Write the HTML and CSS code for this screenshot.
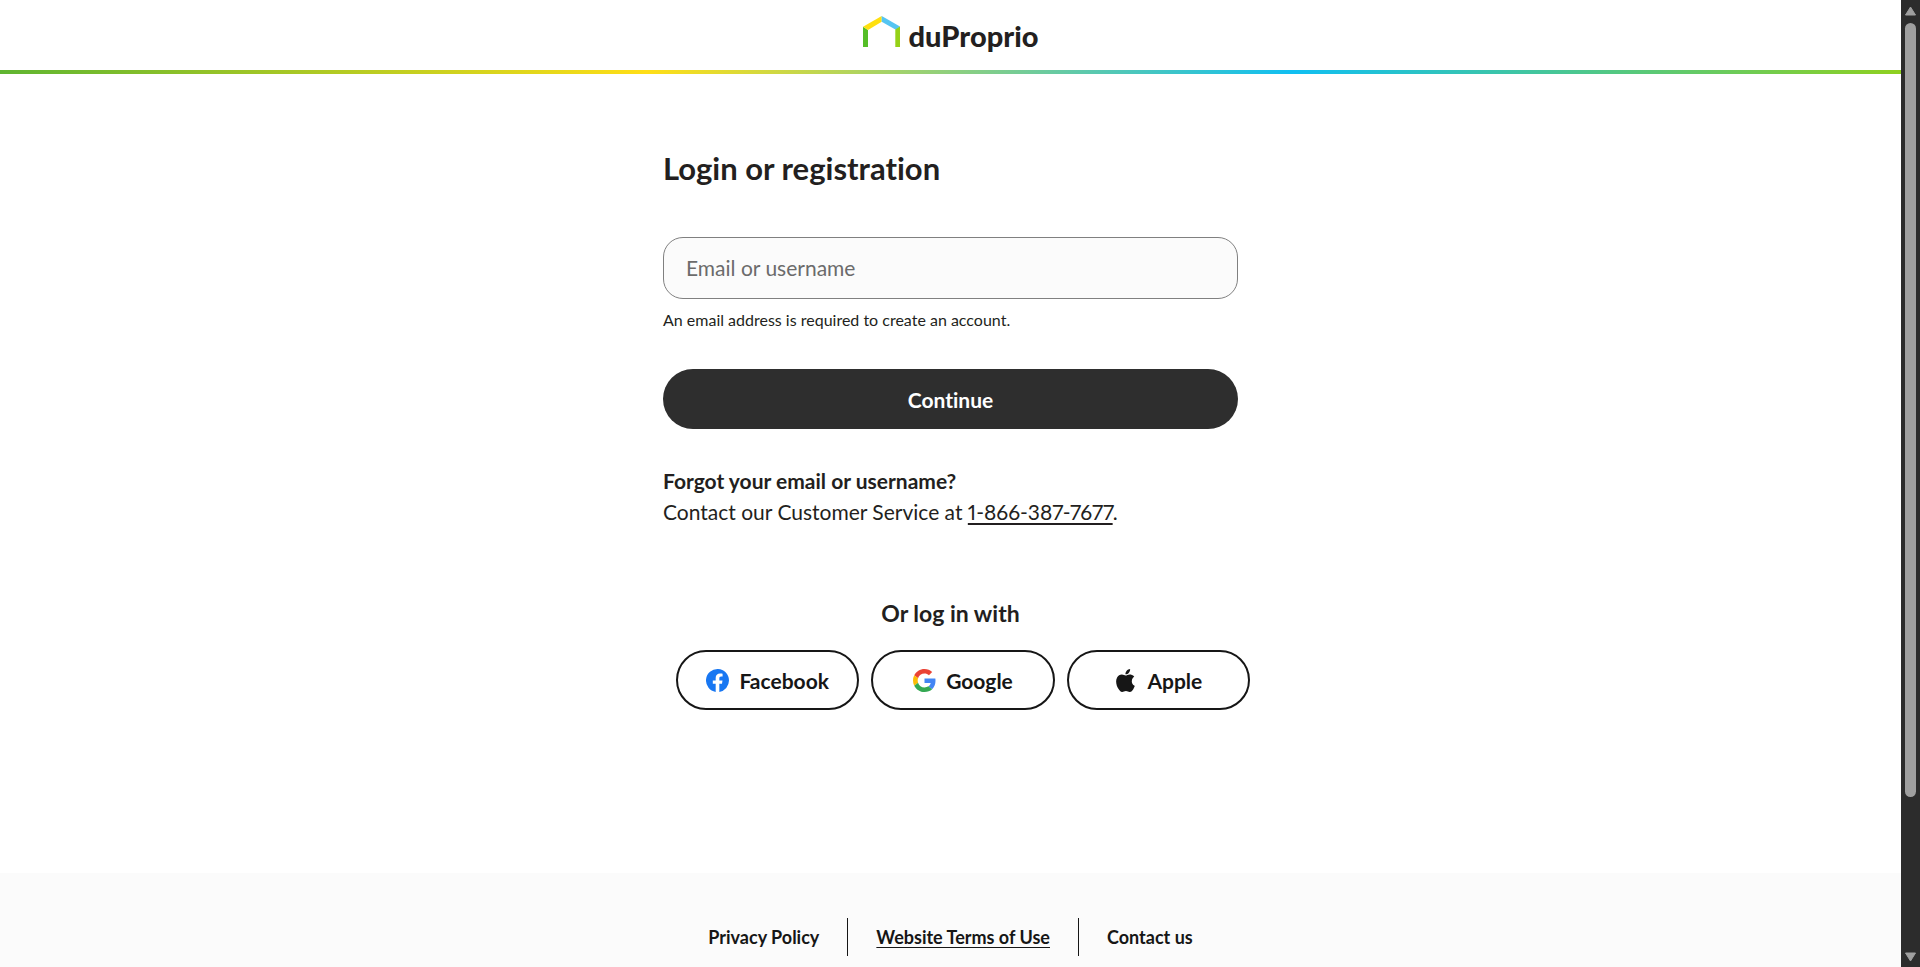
FILE: index.html
```html
<!DOCTYPE html>
<html lang="en">
<head>
<meta charset="utf-8">
<meta name="viewport" content="width=device-width, initial-scale=1">
<title>Login or registration - DuProprio</title>
<link rel="stylesheet" href="styles.css">
</head>
<body>
<div class="viewport">
  <div class="page">
    <header class="header">
      <a class="logo" href="#">
        <svg class="logo-mark" viewBox="0 0 37 31" aria-hidden="true">
          <path fill="#55be28" d="M0 10.7 5 14v17H0z"/>
          <path fill="#ffe00f" d="M0 10.7 18.7 0v5.7L5 14z"/>
          <path fill="#55c5f2" d="M18.7 0 37 10.5 33.3 14 18.7 5.7z"/>
          <path fill="#95d117" d="M32.3 13.4 37 10.5V31h-4.7z"/>
        </svg>
        <span class="logo-text">duProprio</span>
      </a>
    </header>
    <main class="main">
      <h1 class="title">Login or registration</h1>
      <form class="form">
        <input class="field" id="login" type="text" placeholder="Email or username" aria-label="Email or username" aria-describedby="login-help">
        <p class="help" id="login-help">An email address is required to create an account.</p>
        <button class="continue" type="submit">Continue</button>
      </form>
      <section class="forgot">
        <h2 class="forgot-title">Forgot your email or username?</h2>
        <p class="forgot-text">Contact our Customer Service at <a class="phone" href="tel:18663877677">1-866-387-7677</a>.</p>
      </section>
      <section class="social">
        <h2 class="social-title">Or log in with</h2>
        <div class="social-list">
          <button class="social-button" type="button">
            <svg class="icon" viewBox="0 0 24 24" aria-hidden="true"><path fill="#1877f2" d="M24 12a12 12 0 1 0-13.9 11.9v-8.4H7.1V12h3V9.4c0-3 1.8-4.7 4.5-4.7 1.3 0 2.7.2 2.7.2v3h-1.5c-1.5 0-1.9.9-1.9 1.9V12h3.3l-.5 3.5h-2.8v8.4A12 12 0 0 0 24 12z"/></svg>
            Facebook
          </button>
          <button class="social-button" type="button">
            <svg class="icon" viewBox="0 0 48 48" aria-hidden="true">
              <path fill="#ea4335" d="M24 9.5c3.54 0 6.71 1.22 9.21 3.6l6.85-6.85C35.9 2.38 30.47 0 24 0 14.62 0 6.51 5.38 2.56 13.22l7.98 6.19C12.43 13.72 17.74 9.5 24 9.5z"/>
              <path fill="#4285f4" d="M46.98 24.55c0-1.57-.15-3.09-.38-4.55H24v9.02h12.94c-.58 2.96-2.26 5.48-4.78 7.18l7.73 6c4.51-4.18 7.09-10.36 7.09-17.65z"/>
              <path fill="#fbbc05" d="M10.53 28.59A14.5 14.5 0 0 1 9.77 24c0-1.6.27-3.14.76-4.59l-7.98-6.19A24 24 0 0 0 0 24c0 3.88.92 7.54 2.56 10.78z"/>
              <path fill="#34a853" d="M24 48c6.48 0 11.93-2.13 15.89-5.81l-7.73-6c-2.15 1.45-4.92 2.3-8.16 2.3-6.26 0-11.57-4.22-13.47-9.91l-7.98 6.19C6.51 42.62 14.62 48 24 48z"/>
            </svg>
            Google
          </button>
          <button class="social-button" type="button">
            <svg class="icon" viewBox="0 0 24 24" aria-hidden="true"><path fill="#161616" d="M12.15 6.9c-.95 0-2.42-1.08-3.96-1.04-2.04.03-3.91 1.18-4.96 3.01-2.12 3.68-.55 9.1 1.52 12.09 1.01 1.45 2.21 3.09 3.79 3.04 1.52-.07 2.09-.99 3.94-.99 1.83 0 2.35.99 3.96.95 1.64-.03 2.68-1.48 3.68-2.95 1.16-1.69 1.64-3.32 1.66-3.42-.04-.01-3.18-1.22-3.22-4.86-.03-3.04 2.48-4.49 2.6-4.56-1.43-2.09-3.62-2.32-4.39-2.38-2-.16-3.68 1.09-4.62 1.09zM15.53 3.83c.84-1.01 1.4-2.43 1.25-3.83-1.21.05-2.66.81-3.53 1.82-.78.9-1.45 2.34-1.27 3.71 1.34.1 2.71-.69 3.55-1.7z"/></svg>
            Apple
          </button>
        </div>
      </section>
    </main>
    <footer class="footer">
      <nav class="footer-nav">
        <a class="footer-link" href="#">Privacy Policy</a>
        <a class="footer-link footer-link-active" href="#">Website Terms of Use</a>
        <a class="footer-link" href="#">Contact us</a>
      </nav>
    </footer>
  </div>
  <div class="scrollbar" aria-hidden="true">
    <svg class="arrow" viewBox="0 0 13 11"><path d="M6.5 1.5 11.5 9.5h-10z"/></svg>
    <div class="track"><div class="thumb"></div></div>
    <svg class="arrow" viewBox="0 0 13 11"><path d="M6.5 9.5 11.5 1.5h-10z"/></svg>
  </div>
</div>
</body>
</html>
```
FILE: styles.css
```css
* {
  box-sizing: border-box;
}

body {
  margin: 0;
  background: #fff;
  color: #231f20;
  font-family: Lato, "Open Sans", sans-serif;
  font-size: 21px;
  font-variant-ligatures: none;
  font-variant-numeric: proportional-nums;
  line-height: 31px;
}

h1,
h2,
p {
  margin: 0;
}

button,
input {
  font: inherit;
}

.viewport {
  display: flex;
  height: 100vh;
  overflow: hidden;
}

.page {
  flex: 1;
  min-width: 0;
  overflow: hidden;
}

/* Header */
.header {
  position: relative;
  display: flex;
  justify-content: center;
  padding: 16px 0 22px;
}

.header::after {
  content: "";
  position: absolute;
  inset: auto 0 0;
  height: 4px;
  background: linear-gradient(90deg, #5fb531, #ffde17 34%, #10bff2 68%, #8fd01f);
}

.logo {
  display: flex;
  gap: 9px;
  color: inherit;
  text-decoration: none;
}

.logo-mark {
  width: 37px;
  height: 31px;
}

.logo-text {
  padding-top: 4px;
  font-size: 29px;
  font-weight: 900;
  line-height: 32px;
}

/* Login form */
.main {
  max-width: 575px;
  margin: 0 auto;
  padding: 74px 0 163px;
}

.title {
  font-size: 31px;
  font-weight: 700;
  line-height: 40px;
}

.form {
  display: flex;
  flex-direction: column;
  padding-top: 49px;
}

.field {
  width: 100%;
  height: 62px;
  padding: 0 22px 2px;
  border: 1px solid #808080;
  border-radius: 20px;
  background: #fbfbfb;
  color: #231f20;
}

.field::placeholder {
  color: #6b6b6b;
  opacity: 1;
}

.help {
  padding: 8px 0 37px;
  font-size: 16px;
  line-height: 25px;
}

.continue {
  height: 60px;
  border: 0;
  border-radius: 30px;
  background: #2e2e2e;
  color: #fff;
  font-weight: 700;
}

.forgot {
  padding-top: 36px;
}

.forgot-title {
  font-size: 21px;
  font-weight: 700;
  line-height: 31px;
}

.phone {
  color: inherit;
  text-underline-offset: 3px;
}

/* Social sign-in */
.social {
  padding-top: 68px;
}

.social-title {
  font-size: 23px;
  font-weight: 700;
  line-height: 36px;
  text-align: center;
}

.social-list {
  display: grid;
  grid-template-columns: repeat(3, 1fr);
  gap: 12px;
  margin: 19px -12px 0 13px;
}

.social-button {
  display: flex;
  align-items: center;
  justify-content: center;
  gap: 10px;
  height: 60px;
  padding: 0;
  border: 2px solid #161616;
  border-radius: 30px;
  background: #fff;
  color: #161616;
  font-weight: 700;
}

.icon {
  width: 23px;
  height: 23px;
}

/* Footer */
.footer {
  padding: 45px 0 64px;
  background: #fbfbfb;
}

.footer-nav {
  display: flex;
  justify-content: center;
}

.footer-link {
  padding: 0 28px;
  color: #161616;
  font-size: 18px;
  font-weight: 700;
  line-height: 38px;
  text-decoration: none;
}

.footer-link + .footer-link {
  border-left: 1px solid #161616;
}

.footer-link-active {
  text-decoration: underline;
  text-decoration-thickness: 1px;
  text-underline-offset: 3px;
}

/* Scrollbar */
.scrollbar {
  display: flex;
  flex-direction: column;
  align-items: center;
  gap: 6px;
  width: 19px;
  padding: 5px 0 4px;
  background: #2c2c2c;
}

.arrow {
  width: 13px;
  height: 12px;
  fill: #9f9f9f;
  stroke: #9f9f9f;
  stroke-width: 1;
  stroke-linejoin: round;
}

.track {
  flex: 1;
}

.thumb {
  width: 11px;
  height: 84%;
  border-radius: 6px;
  background: #9f9f9f;
}
```
